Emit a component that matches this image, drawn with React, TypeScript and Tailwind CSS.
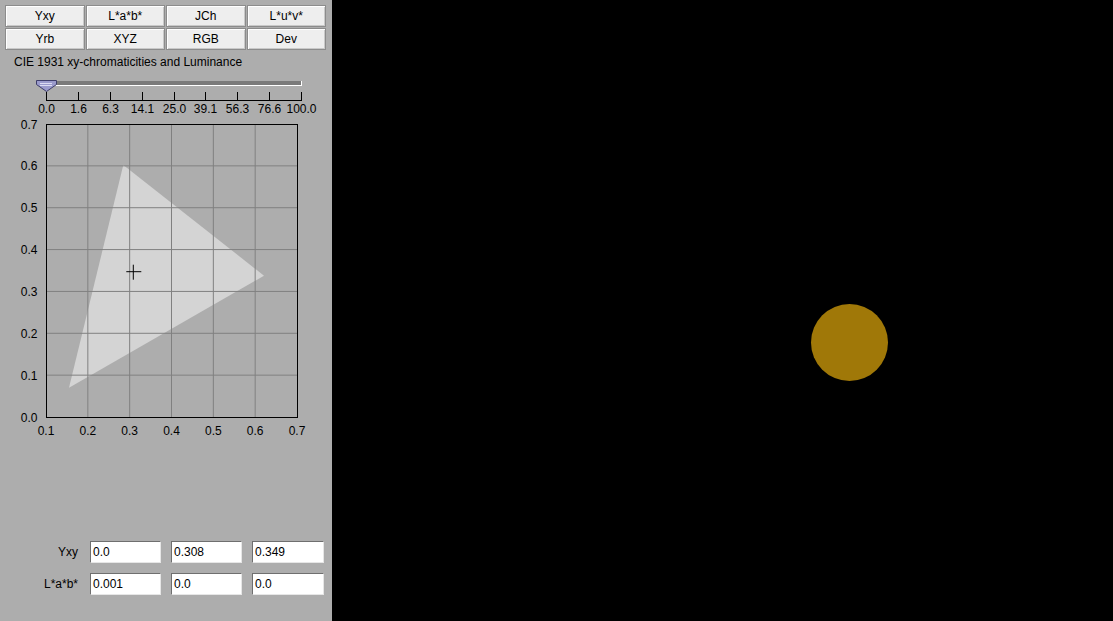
import React from 'react';

const modes = ['Yxy', 'L*a*b*', 'JCh', 'L*u*v*', 'Yrb', 'XYZ', 'RGB', 'Dev'];
const ticks = ['0.0', '1.6', '6.3', '14.1', '25.0', '39.1', '56.3', '76.6', '100.0'];

const font = "'Liberation Sans', Arial, sans-serif";

// chart geometry (svg coords)
const X0 = 46;
const X1 = 297;
const Y0 = 6;
const Y1 = 299;
const step = (X1 - X0) / 6;
const stepY = (Y1 - Y0) / 7;

const Field = ({ value, wide }: { value: string; wide?: boolean }) => (
  <div
    className={
      (wide ? 'w-[72px]' : 'w-[71px]') +
      ' h-[22px] bg-white border border-t-[#6f6f6f] border-l-[#6f6f6f] border-b-[#e6e6e6] border-r-[#e6e6e6] flex items-center pl-[2px] text-[12px] text-black'
    }
  >
    {value}
  </div>
);

const Slider = () => (
  <div className="relative h-[49px]">
    <div className="mt-[12px] ml-[46px] w-[256px] h-[5px] bg-[#7a7a7a] border-b border-r border-white"></div>
    <svg width="332" height="32" className="block">
      <line x1="46" y1="14.5" x2="302" y2="14.5" stroke="#000" />
      {ticks.map((t, i) => {
        const x = Math.round(46 + i * 31.875) + 0.5;
        return (
          <g key={t}>
            <line x1={x} y1="6" x2={x} y2="15" stroke="#000" />
            <text x={x} y="27" textAnchor="middle" fontSize="12" fontFamily={font} fill="#000">
              {t}
            </text>
          </g>
        );
      })}
    </svg>
    {/* thumb */}
    <svg width="23" height="14" className="absolute left-[35px] top-[10px]">
      <polygon points="1.5,1.5 21.5,1.5 21.5,5.5 11.5,12.5 1.5,5.5" fill="#9b9bcc" stroke="#3e3e6a" />
      <line x1="5" y1="4.5" x2="17" y2="4.5" stroke="#dcdcf2" />
      <line x1="5" y1="6.5" x2="17" y2="6.5" stroke="#dcdcf2" />
    </svg>
  </div>
);

const Chart = () => (
  <svg width="332" height="322" className="block">
    <polygon points="123.3,47 264,157.7 69,269.7" fill="#d4d4d4" />
    {[1, 2, 3, 4, 5].map((i) => (
      <line key={'v' + i} x1={X0 + i * step} y1={Y0} x2={X0 + i * step} y2={Y1} stroke="#808080" />
    ))}
    {[1, 2, 3, 4, 5, 6].map((j) => (
      <line key={'h' + j} x1={X0} y1={Y1 - j * stepY} x2={X1} y2={Y1 - j * stepY} stroke="#808080" />
    ))}
    <rect x={X0 + 0.5} y={Y0 + 0.5} width={X1 - X0} height={Y1 - Y0} fill="none" stroke="#000" />
    {/* white point */}
    <line x1="126.3" y1="153.7" x2="141.3" y2="153.7" stroke="#000" />
    <line x1="133.3" y1="146.7" x2="133.3" y2="161.7" stroke="#000" />
    {[0, 1, 2, 3, 4, 5, 6, 7].map((j) => (
      <text key={'yl' + j} x="37.5" y={Y1 - j * stepY + 4.5} textAnchor="end" fontSize="12" fontFamily={font} fill="#000">
        {(j / 10).toFixed(1)}
      </text>
    ))}
    {[0, 1, 2, 3, 4, 5, 6].map((i) => (
      <text key={'xl' + i} x={X0 + i * step} y="316.5" textAnchor="middle" fontSize="12" fontFamily={font} fill="#000">
        {((i + 1) / 10).toFixed(1)}
      </text>
    ))}
  </svg>
);

export default function App() {
  return (
    <div className="flex w-[1113px] h-[621px] overflow-hidden" style={{ fontFamily: font }}>
      <div className="w-[332px] h-full bg-[#adadad] flex flex-col text-black">
        {/* mode buttons */}
        <div className="pt-[5px] px-[5px]">
          <div className="grid grid-cols-4 gap-[1px] w-[321px]">
            {modes.map((m) => (
              <button
                key={m}
                className="h-[22px] bg-[#eeeeee] border border-[#8c8c8c] shadow-[inset_1px_1px_0_#ffffff,inset_-1px_-1px_0_#c9c9c9] text-[12px] leading-none text-black"
              >
                {m}
              </button>
            ))}
          </div>
        </div>

        <div className="mt-[5px] pl-[14px] h-[14px] text-[12px] leading-[14px]">
          CIE 1931 xy-chromaticities and Luminance
        </div>

        <Slider />
        <Chart />

        <div className="flex-1"></div>

        {/* value fields */}
        <div className="flex flex-col gap-[10px] pb-[26px]">
          <div className="flex items-center h-[22px]">
            <div className="w-[78px] text-right text-[12px]">Yxy</div>
            <div className="ml-[12px] flex gap-[10px]">
              <Field value="0.0" />
              <Field value="0.308" />
              <Field value="0.349" wide />
            </div>
          </div>
          <div className="flex items-center h-[22px]">
            <div className="w-[78px] text-right text-[12px]">L*a*b*</div>
            <div className="ml-[12px] flex gap-[10px]">
              <Field value="0.001" />
              <Field value="0.0" />
              <Field value="0.0" wide />
            </div>
          </div>
        </div>
      </div>

      <div className="flex-1 h-full bg-black pl-[479px] pt-[304px]">
        <div className="w-[77px] h-[77px] rounded-full bg-[#a07808]"></div>
      </div>
    </div>
  );
}
